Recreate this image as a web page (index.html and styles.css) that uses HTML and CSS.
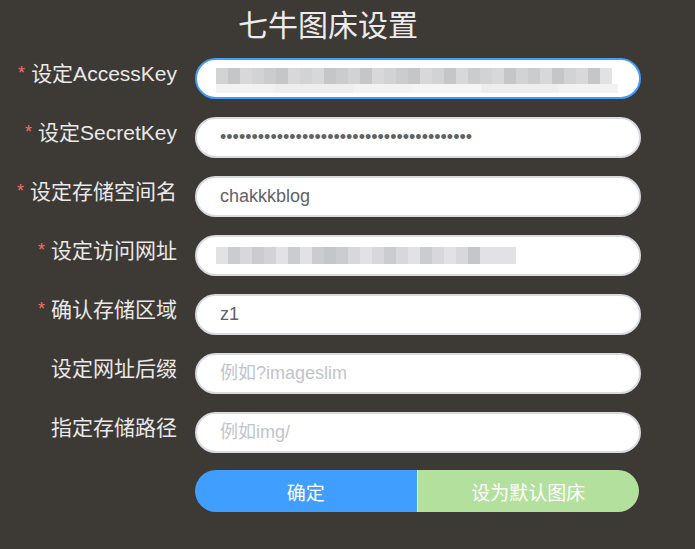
FILE: index.html
```html
<!DOCTYPE html>
<html lang="zh-CN">
<head>
<meta charset="utf-8">
<title>七牛图床设置</title>
<link rel="stylesheet" href="styles.css">
</head>
<body>
<div class="page">
  <h1 class="title">七牛图床设置</h1>
  <form class="form">
    <label class="label required">设定AccessKey</label>
    <div class="field focused">
      <input class="input" type="text" value="">
      <div class="mosaic m1">
        <div class="band top">
          <span class="b a"></span><span class="b b2"></span><span class="b c"></span><span class="b a"></span><span class="b d"></span><span class="b b2"></span><span class="b c"></span><span class="b a"></span><span class="b c"></span><span class="b b2"></span><span class="b d"></span><span class="b a"></span><span class="b b2"></span><span class="b c"></span><span class="b a"></span><span class="b d"></span><span class="b b2"></span><span class="b c"></span><span class="b a"></span><span class="b b2"></span><span class="b c"></span><span class="b d"></span><span class="b a"></span><span class="b c"></span><span class="b b2"></span><span class="b a"></span><span class="b d"></span><span class="b c"></span><span class="b b2"></span><span class="b a"></span><span class="b c"></span><span class="b b2"></span><span class="b e"></span>
        </div>
        <div class="band bottom">
          <span class="lb w1"></span><span class="lb w2"></span><span class="lb w1"></span><span class="lb w3"></span><span class="lb w2"></span><span class="lb w1"></span>
        </div>
      </div>
    </div>

    <label class="label required">设定SecretKey</label>
    <div class="field">
      <input class="input" type="password" value="xxxxxxxxxxxxxxxxxxxxxxxxxxxxxxxxxxxxxxxx">
    </div>

    <label class="label required">设定存储空间名</label>
    <div class="field">
      <input class="input" type="text" value="chakkkblog">
    </div>

    <label class="label required">设定访问网址</label>
    <div class="field">
      <input class="input" type="text" value="">
      <div class="mosaic m4">
        <div class="band top">
          <span class="b e"></span><span class="b d"></span><span class="b c"></span><span class="b d"></span><span class="b a"></span><span class="b e"></span><span class="b d"></span><span class="b e"></span><span class="b d"></span><span class="b b2"></span><span class="b d"></span><span class="b c"></span><span class="b e"></span><span class="b c"></span><span class="b d"></span><span class="b c"></span><span class="b e"></span><span class="b d"></span><span class="b c"></span><span class="b e"></span><span class="b c"></span><span class="b b2"></span><span class="b e"></span><span class="b e"></span><span class="b e"></span>
        </div>
      </div>
    </div>

    <label class="label required">确认存储区域</label>
    <div class="field">
      <input class="input" type="text" value="z1">
    </div>

    <label class="label">设定网址后缀</label>
    <div class="field">
      <input class="input" type="text" placeholder="例如?imageslim">
    </div>

    <label class="label">指定存储路径</label>
    <div class="field">
      <input class="input" type="text" placeholder="例如img/">
    </div>

    <div class="spacer"></div>
    <div class="buttons">
      <button type="button" class="btn primary">确定</button>
      <button type="button" class="btn success">设为默认图床</button>
    </div>
  </form>
</div>
</body>
</html>
```
FILE: styles.css
```css
html, body {
  margin: 0;
  padding: 0;
  background: #3d3935;
  height: 100%;
}
body {
  font-family: "Liberation Sans", "Noto Sans CJK SC", Arial, sans-serif;
}
.page {
  width: 656px;
}
.title {
  margin: 0;
  text-align: center;
  font-family: "Noto Sans CJK SC", sans-serif;
  font-weight: 400;
  font-size: 30px;
  line-height: 46px;
  color: #ececec;
  height: 58px;
}
.form {
  display: grid;
  grid-template-columns: 177px 446px;
  column-gap: 18px;
  row-gap: 18px;
}
.label {
  text-align: right;
  font-size: 21px;
  line-height: 32px;
  color: #e9e9e9;
  white-space: nowrap;
}
.label.required::before {
  content: "*";
  color: #f56c6c;
  font-size: 18px;
  margin-right: 6px;
  position: relative;
  top: -2px;
}
.field {
  position: relative;
  height: 41px;
}
.input {
  box-sizing: border-box;
  width: 100%;
  height: 41px;
  border: 2px solid #d8dae2;
  border-radius: 21px;
  background: #fff;
  padding: 0 0 0 23px;
  font-family: "Liberation Sans", "Noto Sans CJK SC", Arial, sans-serif;
  font-size: 18px;
  color: #606266;
  outline: none;
}
.input::placeholder {
  color: #c0c4cc;
}
.field.focused .input {
  border-color: #409eff;
}
.mosaic {
  position: absolute;
  left: 21px;
  pointer-events: none;
}
.band {
  display: flex;
}
.m1 {
  top: 10px;
  width: 402px;
}
.m1 .band.top .b {
  width: 12px;
  height: 16px;
}
.m1 .band.bottom {
  height: 9px;
}
.lb {
  height: 9px;
  background: #f0f0f0;
}
.lb.w1 { width: 60px; background: #f2f2f2; }
.lb.w2 { width: 80px; background: #eeeeee; }
.lb.w3 { width: 70px; background: #f5f5f5; }
.b.a { background: #d2d3d5; }
.b.b2 { background: #c5c6c8; }
.b.c { background: #d8d8da; }
.b.d { background: #cbcccd; }
.b.e { background: #e2e2e4; }
.m4 {
  top: 12px;
  width: 300px;
}
.m4 .band.top .b {
  width: 12px;
  height: 17px;
}
.spacer {
  height: 41px;
}
.buttons {
  display: flex;
  height: 42px;
  margin-top: -1px;
  width: 444px;
}
.btn {
  flex: 1;
  border: none;
  margin: 0;
  font-family: "Noto Sans CJK SC", sans-serif;
  font-size: 19px;
  color: #fff;
  cursor: pointer;
  padding: 0;
}
.btn.primary {
  background: #409eff;
  border-radius: 21px 0 0 21px;
}
.btn.success {
  background: #b3e19d;
  border-radius: 0 21px 21px 0;
  border-left: 1px solid rgba(255, 255, 255, 0.55);
}
```
